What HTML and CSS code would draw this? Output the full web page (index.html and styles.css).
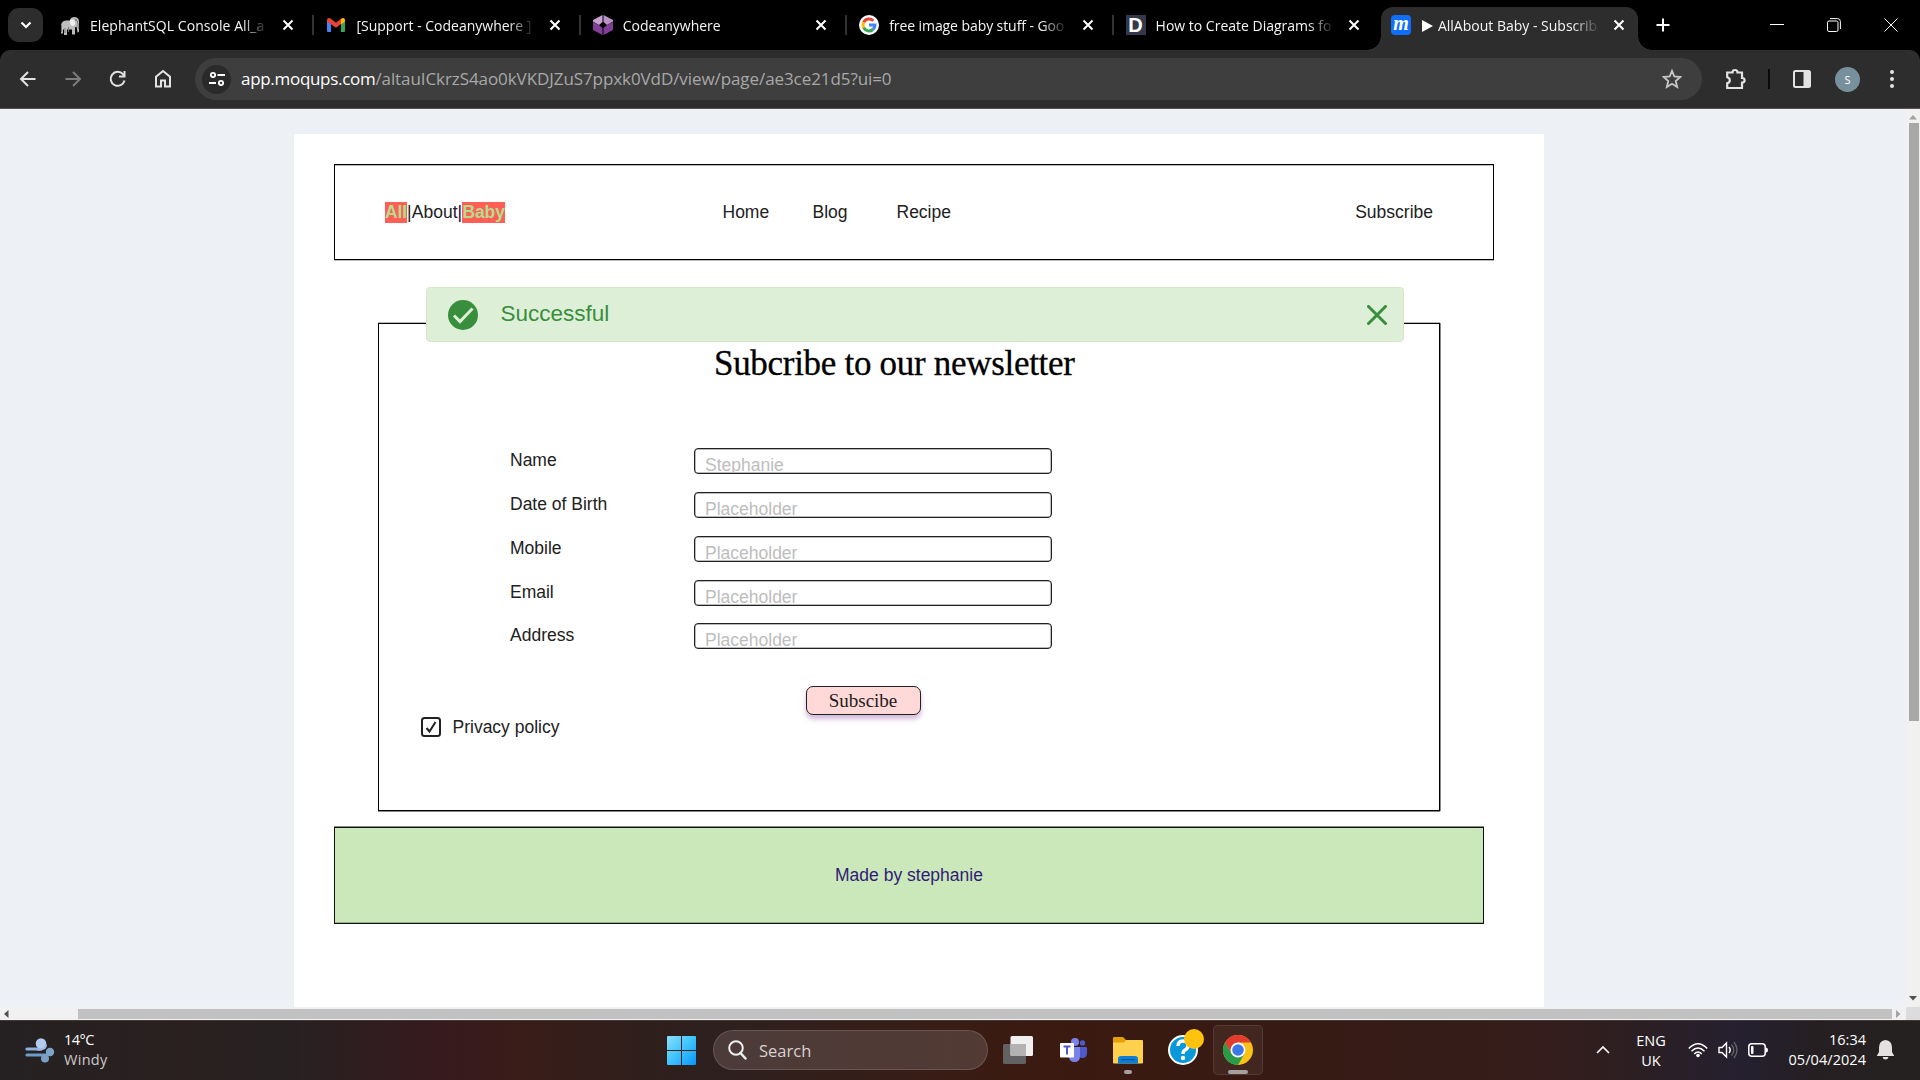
FILE: index.html
```html
<!DOCTYPE html>
<html lang="en">
<head>
<meta charset="utf-8">
<title>AllAbout Baby - Subscribe</title>
<link rel="stylesheet" href="styles.css">
</head>
<body>
<svg class="defs" width="0" height="0">
  <symbol id="x" viewBox="0 0 12 12"><path d="M1.5 1.5l9 9M10.5 1.5l-9 9" fill="none" stroke="#fff" stroke-width="2"/></symbol>
</svg>
<header class="tabstrip">
  <button class="tab-search"><svg width="12" height="12" viewBox="0 0 12 12"><path d="M1.500 3.500L6 8l4.500-4.500" fill="none" stroke="#fff" stroke-width="2.200"/></svg></button>
  <div class="tab">
    <svg class="fav" viewBox="0 0 20 20"><path d="M1 11q0-5 5-5.500h4q0-3 4-3.500 5 0 5 5v10l-1.500.5-1-6-1.500 1v7h-3v-5H7v5.500H4V14l-1 1v3.500H1z" fill="#bdbdbd"/><path d="M10 5q4-2 5 2t-3 4q-3-2-2-6z" fill="#efefef"/><path d="M1.500 10v7M5 13v5M8.500 12v5M17.500 6l1 8" stroke="#777" fill="none"/><circle cx="16" cy="5" r=".7" fill="#222"/></svg>
    <span class="tab-title t1">ElephantSQL Console All_a</span><svg class="close"><use href="#x"/></svg>
  </div>
  <div class="tab">
    <svg class="fav" viewBox="0 0 20 20"><path d="M1 5h4v12H2q-1 0-1-1z" fill="#4285f4"/><path d="M15 5h4v11q0 1-1 1h-3z" fill="#34a853"/><path d="M1 5q0-2 2-2 1 0 2 .8l5 3.900 5-3.900V9l-5 3.800L5 9.200 1 6.300z" fill="#ea4335"/><path d="M15 3.800q4-2 4 1.700v1L15 9.500z" fill="#fbbc04"/></svg>
    <span class="tab-title t2">[Support - Codeanywhere ]</span><svg class="close"><use href="#x"/></svg>
  </div>
  <div class="tab">
    <svg class="fav" viewBox="0 0 20 20"><path d="M9.500 0v7L6 10 0 6.500V5z" fill="#c7a3d2"/><path d="M10.500 0v7l3.500 3 6-3.500V5z" fill="#b992c8"/><path d="M0 7l6 3 3.500 3v7L0 15zM20 7l-6 3-3.500 3v7l9.500-5z" fill="#823f98"/></svg>
    <span class="tab-title t3">Codeanywhere</span><svg class="close"><use href="#x"/></svg>
  </div>
  <div class="tab">
    <svg class="fav" viewBox="0 0 20 20"><circle cx="10" cy="10" r="10" fill="#fff"/><g fill="none" stroke-width="3"><path d="M14.300 5.700A6 6 0 0 0 4.700 7.200" stroke="#ea4335"/><path d="M4.700 7.200a6 6 0 0 0 0 5.600" stroke="#fbbc05"/><path d="M4.700 12.800a6 6 0 0 0 9.200 1.700" stroke="#34a853"/><path d="M13.900 14.500A6 6 0 0 0 16 10h-6" stroke="#4285f4"/></g></svg>
    <span class="tab-title t4">free image baby stuff - Goo</span><svg class="close"><use href="#x"/></svg>
  </div>
  <div class="tab last">
    <span class="fav fav-d">D</span>
    <span class="tab-title t5">How to Create Diagrams fo</span><svg class="close"><use href="#x"/></svg>
  </div>
  <div class="tab active">
    <span class="fav fav-m">m</span>
    <span class="tab-title t6"><svg class="play" viewBox="0 0 11 12"><path d="M0 0l11 6-11 6z" fill="#fff"/></svg>AllAbout Baby - Subscrib</span><svg class="close"><use href="#x"/></svg>
  </div>
  <svg class="plus" viewBox="0 0 14 14"><path d="M7 .5v13M.5 7h13" stroke="#fff" stroke-width="2"/></svg>
  <div class="window-controls">
    <svg width="14" height="14" viewBox="0 0 14 14"><path d="M0 6.500h14" stroke="#fff"/></svg>
    <svg width="14" height="14" viewBox="0 0 14 14"><g fill="none" stroke="#fff"><rect x=".5" y="3" width="10.500" height="10.500" rx="1.500"/><path d="M3 .6h7.500q2.900 0 2.900 2.900V11"/></g></svg>
    <svg width="14" height="14" viewBox="0 0 14 14"><path d="M.5.500l13 13M13.500.500l-13 13" stroke="#fff"/></svg>
  </div>
</header>
<nav class="toolbar">
  <div class="nav-icons">
    <svg width="20" height="20" viewBox="0 0 20 20"><path d="M17.500 10H3.500M10 3l-7 7 7 7" fill="none" stroke="#e3e3e3" stroke-width="2"/></svg>
    <svg width="20" height="20" viewBox="0 0 20 20"><path d="M2.500 10h14M10 3l7 7-7 7" fill="none" stroke="#7c7c7c" stroke-width="2"/></svg>
    <svg width="20" height="20" viewBox="0 0 20 20"><path d="M16.500 11.500A7 7 0 1 1 15 5.200l1.500 1.800" fill="none" stroke="#e3e3e3" stroke-width="2"/><path d="M17.500 2v6.500H11v-2h4.500V2z" fill="#e3e3e3"/></svg>
    <svg width="20" height="20" viewBox="0 0 20 20"><path d="M3 17.500V7.800L10 2l7 5.800v9.700h-5v-6H8v6z" fill="none" stroke="#e3e3e3" stroke-width="2"/></svg>
  </div>
  <div class="omnibox">
    <span class="site-info"><svg width="18" height="18" viewBox="0 0 18 18"><g fill="none" stroke="#fff" stroke-width="1.900"><circle cx="5" cy="5" r="2.100"/><path d="M9.500 5H17M1 13h7"/><circle cx="13" cy="13" r="2.100"/></g></svg></span>
    <span class="url"><b>app.moqups.com</b><span class="url-path">/altauICkrzS4ao0kVKDJZuS7ppxk0VdD/view/page/ae3ce21d5?ui=0</span></span>
    <svg class="star" viewBox="0 0 20 20"><path d="M10 1.800l2.300 5.700 6 .5-4.600 4 1.500 6-5.200-3.300L4.800 18l1.500-6L1.700 8l6-.5z" fill="none" stroke="#c7c7c7" stroke-width="1.800"/></svg>
  </div>
  <svg class="puzzle" viewBox="0 0 22 22"><path d="M2.200 4.500H7.500Q7.500 2 10 2t2.500 2.500H17v5.500q2.600 0 2.600 2.300T17 14.700V20H2.200v-4.800q2.600-.6 2.600-3t-2.600-3z" fill="none" stroke="#e3e3e3" stroke-width="2.200"/></svg>
  <span class="bar-divider"></span>
  <svg class="panel" viewBox="0 0 18 18"><rect x="1" y="1" width="16" height="16" rx="1.500" fill="none" stroke="#e3e3e3" stroke-width="2"/><path d="M10.500 1H17v16h-6.500z" fill="#e3e3e3"/></svg>
  <span class="avatar">S</span>
  <svg class="dots" viewBox="0 0 4 18"><g fill="#e3e3e3"><circle cx="2" cy="2" r="2"/><circle cx="2" cy="9" r="2"/><circle cx="2" cy="16" r="2"/></g></svg>
</nav>
<main class="viewport">
  <div class="canvas">
    <section class="sheet">
      <div class="site-nav">
        <div class="brand"><strong>All</strong><i>|</i>About<i class="dark">|</i><strong>Baby</strong></div>
        <a class="home">Home</a><a class="blog">Blog</a><a class="recipe">Recipe</a><a class="subscribe">Subscribe</a>
      </div>
      <div class="form-box">
        <div class="alert">
          <svg class="ok" viewBox="0 0 30 30"><circle cx="15" cy="15" r="15" fill="#388e3c"/><path d="M6 15.500l6 6L24.500 8.500" fill="none" stroke="#deefd8" stroke-width="3"/></svg>
          <span>Successful</span>
          <svg class="dismiss" viewBox="0 0 20 20"><path d="M1.500 1.500l17 17M18.500 1.500l-17 17" stroke="#388e3c" stroke-width="3" stroke-linecap="round"/></svg>
        </div>
        <h1>Subcribe to our newsletter</h1>
        <form class="fields">
          <label>Name</label><div class="input">Stephanie</div>
          <label>Date of Birth</label><div class="input">Placeholder</div>
          <label>Mobile</label><div class="input">Placeholder</div>
          <label>Email</label><div class="input">Placeholder</div>
          <label>Address</label><div class="input">Placeholder</div>
        </form>
        <div class="submit">Subscibe</div>
        <div class="privacy"><svg width="20" height="20" viewBox="0 0 20 20"><rect x="1" y="1" width="18" height="18" rx="2.500" fill="none" stroke="#212121" stroke-width="2"/><path d="M5.500 11l3 3.500L14.500 5" fill="none" stroke="#212121" stroke-width="2"/></svg><span>Privacy policy</span></div>
      </div>
      <footer class="site-footer">Made by stephanie</footer>
    </section>
  </div>
  <div class="vscroll"><svg width="8" height="5" viewBox="0 0 8 5"><path d="M4 0l4 4.500H0z" fill="#a3a3a3"/></svg><span></span><svg width="8" height="5" viewBox="0 0 8 5"><path d="M0 0h8L4 4.500z" fill="#505050"/></svg></div>
  <div class="hscroll"><svg width="5" height="8" viewBox="0 0 5 8"><path d="M4.500 0v8L0 4z" fill="#505050"/></svg><span></span><svg width="5" height="8" viewBox="0 0 5 8"><path d="M0 0v8l4.500-4z" fill="#a3a3a3"/></svg></div>
  <div class="corner"></div>
</main>
<footer class="taskbar">
  <div class="weather">
    <svg width="30" height="26" viewBox="0 0 30 26"><g fill="none" stroke-width="3.200" stroke-linecap="round"><path d="M2 12h14" stroke="#8fb1dd"/><path d="M2 18h20" stroke="#6f9ccb"/></g><circle cx="16" cy="6.500" r="5.300" fill="#b3cbed"/><path d="M12 12.500q9 1 9-5" stroke="#9dbae3" stroke-width="2" fill="none"/><circle cx="25" cy="15" r="4.200" fill="#7ea4cc"/><circle cx="20" cy="21.500" r="4" fill="#7b9fc5"/></svg>
    <div><p>14°C</p><p class="windy">Windy</p></div>
  </div>
  <div class="apps">
    <svg class="start" viewBox="0 0 29 29"><defs><linearGradient id="win" x1="0" y1="0" x2="1" y2="1"><stop offset="0" stop-color="#8be0ff"/><stop offset=".5" stop-color="#3ec3fd"/><stop offset="1" stop-color="#0796fb"/></linearGradient></defs><path d="M1 0h13v14H0V1q0-1 1-1zM15 0h13q1 0 1 1v13H15zM0 15h14v14H1q-1 0-1-1zM15 15h14v13q0 1-1 1H15z" fill="url(#win)"/></svg>
    <div class="search"><svg width="19" height="20" viewBox="0 0 19 20"><circle cx="8" cy="8" r="6.800" fill="none" stroke="#eee" stroke-width="2"/><path d="M12.500 13l5 5.500" stroke="#eee" stroke-width="2.500" stroke-linecap="round"/></svg>Search</div>
    <svg class="taskview" viewBox="0 0 30 28"><rect x="0" y="8" width="23" height="20" rx="1.500" fill="#626262"/><rect x="7.500" width="22.500" height="20" rx="1.500" fill="#f0f0f0"/><path d="M7.500 8H23v12H9q-1.500 0-1.500-1.500z" fill="#b3b3b3"/></svg>
    <svg class="teams" viewBox="0 0 27 24"><circle cx="15" cy="4" r="4" fill="#7b83eb"/><circle cx="22.500" cy="5" r="2.700" fill="#5059c9"/><path d="M19 9h7q1 0 1 1v5q0 5-4.500 5T18 16z" fill="#5059c9"/><path d="M9 9h11v9q0 6-5.500 6T9 18z" fill="#7b83eb"/><rect y="5" width="14" height="14.500" rx="1" fill="#fff"/><path d="M3.500 8.500h7M7 8.500v8" stroke="#5059c9" stroke-width="2"/></svg>
    <div class="app explorer"><svg width="30" height="27" viewBox="0 0 30 27"><path d="M0 1q0-1 1-1h9l3 3v4H0z" fill="#e3a008"/><path d="M0 5.500h11l2-2.500h16q1 0 1 1v21.500q0 1-1 1H1q-1 0-1-1z" fill="#ffd04c"/><path d="M5 26.500V22q0-3 3-3h14q3 0 3 3v4.500z" fill="#0b7fd6"/><path d="M8.500 22.700h13" stroke="#04508f" stroke-width="1.200"/></svg></div>
    <svg class="help" viewBox="0 0 36 36"><circle cx="15" cy="21" r="14" fill="#0998d9" stroke="#fff" stroke-width="2"/><path d="M10 17q0-5 5-5t5 4.500q0 3-3 4.500-2 1-2 4" fill="none" stroke="#fff" stroke-width="3.400"/><circle cx="15" cy="29" r="2.200" fill="#fff"/><circle cx="26" cy="10" r="10" fill="#ffc20e"/></svg>
    <div class="app chrome"><svg width="30" height="30" viewBox="0 0 30 30"><circle cx="15" cy="15" r="15" fill="#fbc116"/><path d="M2 7.500A15 15 0 0 1 28 7.500H15L8.500 18.700z" fill="#e33b2e"/><path d="M2 7.500A15 15 0 0 0 15 30l6.500-11.200L8.500 18.700z" fill="#2a9c49"/><circle cx="15" cy="15" r="7.500" fill="#fff"/><circle cx="15" cy="15" r="5.800" fill="#3b79e8"/></svg></div>
  </div>
  <div class="tray">
    <svg class="chev" viewBox="0 0 14 8"><path d="M1 7l6-6 6 6" fill="none" stroke="#fff" stroke-width="1.700"/></svg>
    <div class="lang"><p>ENG</p><p>UK</p></div>
    <svg class="wifi" viewBox="0 0 20 16"><g fill="none" stroke="#fff" stroke-width="1.500"><path d="M.8 6.500q9.200-9.500 18.400 0M3.500 9.300q6.500-6.500 13 0M6.200 12q3.800-3.800 7.600 0"/></g><circle cx="10" cy="13.500" r="1.800" fill="#fff"/></svg>
    <svg class="speaker" viewBox="0 0 20 18"><path d="M1 6.500h3L8.500 2v14L4 11.500H1z" fill="none" stroke="#fff" stroke-width="1.400"/><path d="M11 6q2.400 3 0 6" fill="none" stroke="#fff" stroke-width="1.500"/><path d="M13.500 3.500q4.500 5.500 0 11M16 1q6 8 0 16" fill="none" stroke="#666" stroke-width="1.300"/></svg>
    <svg class="battery" viewBox="0 0 20 14"><rect x=".8" y=".8" width="16.400" height="12.400" rx="3" fill="none" stroke="#fff" stroke-width="1.500"/><rect x="3" y="3" width="2.500" height="8" rx="1" fill="#fff"/><path d="M18 4.500q2 0 2 2.500t-2 2.500z" fill="#fff"/></svg>
    <div class="clock"><p class="time">16:34</p><p class="date">05/04/2024</p></div>
    <svg class="bell" viewBox="0 0 17 20"><path d="M8.500 0Q15 .5 15 7.500v4.500l2 3.500v.5H0v-.5L2 12V7.500Q2 .5 8.500 0zM5.500 17h6q-.5 2.500-3 2.500t-3-2.500z" fill="#e4e2e1"/></svg>
  </div>
</footer>
</body>
</html>
```
FILE: styles.css
```css
* { box-sizing: border-box; }
body { margin: 0; width: 1920px; height: 1080px; overflow: hidden; display: flex; flex-direction: column; background: #000; color: #fff; font-family: "Open Sans", "Noto Sans", sans-serif; }
p, h1 { margin: 0; font-weight: 400; }
svg { display: block; flex: none; }
.defs { position: absolute; }

.tabstrip { height: 50px; flex: none; display: flex; background: #000; }
.tab-search { width: 35px; height: 34px; margin: 8px 6px 0 8px; padding: 0; border: 0; border-radius: 11px; background: #2d2d2d; display: grid; place-items: center; }
.tab { width: 266.400px; height: 50px; padding: 0 21px 0 11px; display: flex; align-items: center; position: relative; flex: none; }
.tab:not(.last):not(.active)::after { content: ""; position: absolute; right: 1px; top: 15px; width: 2px; height: 20px; background: #333; }
.fav { width: 20px; height: 20px; margin-right: 10px; flex: none; }
.tab-title { flex: none; width: 183px; margin-top: 1px; white-space: nowrap; font-size: 14px; line-height: 22px; color: #f5f5f5; display: flex; align-items: center; -webkit-mask-image: linear-gradient(90deg, #000 152px, transparent 179px); mask-image: linear-gradient(90deg, #000 152px, transparent 179px); }
.t1 { letter-spacing: .05px; }
.t4 { letter-spacing: -.08px; }
.close { width: 12px; height: 12px; margin-left: auto; }
.active { width: 257px; height: 43px; margin-top: 7px; padding: 0 13px 7px 10px; border-radius: 12px 12px 0 0; background: #2d2d2d; }
.active::before { content: ""; position: absolute; left: -14px; bottom: 0; width: 14px; height: 14px; background: radial-gradient(circle at 0 0, transparent 13.500px, #2d2d2d 14px); }
.active::after { content: ""; position: absolute; right: -14px; bottom: 0; width: 14px; height: 14px; background: radial-gradient(circle at 100% 0, transparent 13.500px, #2d2d2d 14px); }
.play { width: 11px; height: 12px; margin: 0 5px 0 1px; }
.fav-d { background: #35374a; font: 700 20px/20px "Liberation Sans", sans-serif; text-align: center; color: #fff; }
.fav-m { background: #0f6ffb; border-radius: 4px; font: italic 700 20px/16px "Liberation Serif", serif; text-align: center; color: #fff; }
.plus { width: 14px; height: 14px; margin: 18px 0 0 18px; }
.window-controls { margin: 18px 22px 0 auto; display: flex; gap: 43px; }

.toolbar { height: 59px; flex: none; display: flex; align-items: center; background: #2d2d2d; border-bottom: 1px solid #5b5053; border-radius: 10px 10px 0 0; }
.nav-icons { width: 195px; padding-left: 18px; display: flex; gap: 25px; }
.omnibox { width: 1507px; height: 42px; border-radius: 21px; background: #3e3e3e; display: flex; align-items: center; padding: 0 20px 0 7px; }
.site-info { width: 29px; height: 29px; margin-right: 10px; border-radius: 50%; background: #2a2a2a; display: grid; place-items: center; }
.url { font-size: 17px; line-height: 24px; color: #fff; white-space: nowrap; }
.url b { font-weight: 400; letter-spacing: -.3px; }
.url-path { color: #a8a8a8; letter-spacing: -.08px; }
.star { width: 20px; height: 20px; margin-left: auto; }
.puzzle { width: 22px; height: 22px; margin-left: 23px; }
.bar-divider { width: 2px; height: 20px; margin-left: 21px; background: #0a0a0a; }
.panel { width: 18px; height: 18px; margin-left: 23px; }
.avatar { width: 25px; height: 25px; margin-left: 24px; border-radius: 50%; background: #78909c; text-align: center; font-size: 11px; line-height: 25px; }
.dots { width: 4px; height: 18px; margin-left: 30px; }

.viewport { height: 911px; flex: none; display: grid; grid-template: 898px 13px / 1906px 14px; background: #edf0f5; }
.canvas { overflow: hidden; padding: 25px 0 0 294px; font: 17.500px/21px "Liberation Sans", Arial, sans-serif; color: #212121; }
.sheet { width: 1250px; height: 873px; padding: 30px 0 0 40px; background: #fff; }
.site-nav { width: 1160px; height: 96px; border: 1px solid #000; box-shadow: inset 0 1px #bbb, 0 1px #bbb; display: flex; align-items: center; padding: 0 60px 0 50px; }
.brand { width: 337.500px; white-space: nowrap; display: flex; }
.brand strong { background: #ff5f57; color: #b5dc8c; letter-spacing: -.1px; }
.brand i { font-style: normal; width: 4.800px; }
.brand .dark { color: #160a40; }
.home { width: 90px; }
.blog { width: 84px; }
.subscribe { margin-left: auto; }
.form-box { position: relative; width: 1062px; height: 488px; margin: 63px 0 0 44px; border: 1px solid #000; box-shadow: 0 -1px #bbb, 1px 0 #888, 0 1px #888; padding: 21px 0 0; }
.alert { position: absolute; left: 46.500px; top: -37px; width: 978px; height: 55px; border: 1px solid #d3e9c5; border-radius: 4px; background: #deefd8; display: flex; align-items: center; padding: 0 16px 0 21px; font-size: 22.500px; color: #388e3c; }
.ok { width: 30px; height: 30px; margin-right: 23px; }
.alert span { padding-bottom: 2px; }
.dismiss { width: 20px; height: 20px; margin-left: auto; }
h1 { margin-left: 335px; font: 35px/38px "Liberation Serif", serif; color: #000; letter-spacing: -.3px; -webkit-text-stroke: .3px #000; white-space: nowrap; }
.fields { display: grid; grid-template-columns: 184px 358px; grid-auto-rows: 26px; row-gap: 17.800px; margin: 65.200px 0 0 131px; }
.fields label { line-height: 25px; }
.input { height: 26px; overflow: hidden; border: 1px solid #212121; box-shadow: inset 0 0 0 .5px #777; border-radius: 4px; padding: 6px 0 0 10px; color: #bdbdbd; }
.submit { width: 115px; height: 29px; margin: 36.800px 0 0 426.500px; border: 1px solid #212121; border-radius: 7px; background: #ffd8d8; box-shadow: 0 4px 5px rgba(126, 55, 150, .35); text-align: center; font: 19px/28px "Liberation Serif", serif; }
.privacy { display: flex; align-items: center; gap: 11.500px; margin: 1px 0 0 42px; }
.privacy span { padding-top: 1px; }
.site-footer { width: 1150px; height: 97px; margin-top: 16px; border: 1px solid #111; box-shadow: 0 -1px #888, inset 0 -1px #98ad8c; background: #cbe8ba; color: #311b76; text-align: center; line-height: 95px; }

.vscroll { background: #f1f1f1; display: flex; flex-direction: column; align-items: center; padding: 6px 0 6px; }
.vscroll span { width: 10px; height: 598px; margin: 3px 0 auto 2px; background: #a8a8a8; }
.hscroll { background: #f1f1f1; display: flex; align-items: center; padding: 0 5px 0 4px; }
.hscroll span { width: 1814px; height: 10px; margin: 0 auto 0 69px; background: #c1c1c1; }
.corner { background: #dcdcdc; }

.taskbar { height: 60px; flex: none; display: flex; border-top: 1px solid #43383a; background: linear-gradient(90deg, #252122 0, #2a2020 180px, #272122 290px, #361a1e 430px, #3a1c18 520px, #2f1f1c 640px, #2d201e 720px, #371d17 900px, #3b1a10 1050px, #371a13 1250px, #351d1b 1540px, #2b1f23 1640px, #252030 1740px, #251f21 1820px, #252120 1920px); }
.weather { width: 667px; padding: 9px 0 0 25px; display: flex; gap: 9px; font-size: 14.500px; line-height: 20px; letter-spacing: -.5px; }
.weather svg { margin-top: 7px; }
.windy { color: #cfcaca; letter-spacing: .3px; }
.apps { width: 597px; display: flex; align-items: center; padding-bottom: 1px; }
.start { width: 29px; height: 29px; }
.search { width: 275px; height: 40px; margin: 0 15px 0 17px; border-radius: 20px; border: 1px solid rgba(255, 255, 255, .14); background: linear-gradient(90deg, #4b3b39, #533a34); display: flex; align-items: center; gap: 12px; padding-left: 14px; font-size: 16.500px; color: #d8d1cf; }
.taskview { width: 30px; height: 28px; }
.teams { width: 27px; height: 24px; margin: 0 26px 0 27px; }
.app { position: relative; display: grid; place-items: center; }
.app::after { content: ""; position: absolute; border-radius: 2px; background: #a5a09e; }
.explorer { width: 30px; height: 50px; }
.explorer::after { width: 8px; height: 4px; left: 11px; bottom: 1px; }
.help { width: 36px; height: 36px; margin: 0 9px 6px 25px; }
.chrome { width: 50px; height: 50px; border: 1px solid rgba(255, 255, 255, .09); border-radius: 5px; background: rgba(255, 255, 255, .06); }
.chrome::after { width: 20px; height: 4px; left: 14px; bottom: 0; }
.tray { flex: 1; display: flex; align-items: center; padding: 0 0 1px 332px; font-size: 14.500px; line-height: 20px; }
.chev { width: 14px; height: 8px; }
.lang { width: 34px; margin-left: 24px; padding-top: 1px; text-align: center; }
.wifi { width: 20px; height: 16px; margin-left: 20px; }
.speaker { width: 20px; height: 18px; margin-left: 10px; }
.battery { width: 20px; height: 14px; margin-left: 10px; }
.clock { width: 98px; text-align: right; white-space: nowrap; }
.date { letter-spacing: .05px; }
.bell { width: 17px; height: 20px; margin-left: 11px; }
```
